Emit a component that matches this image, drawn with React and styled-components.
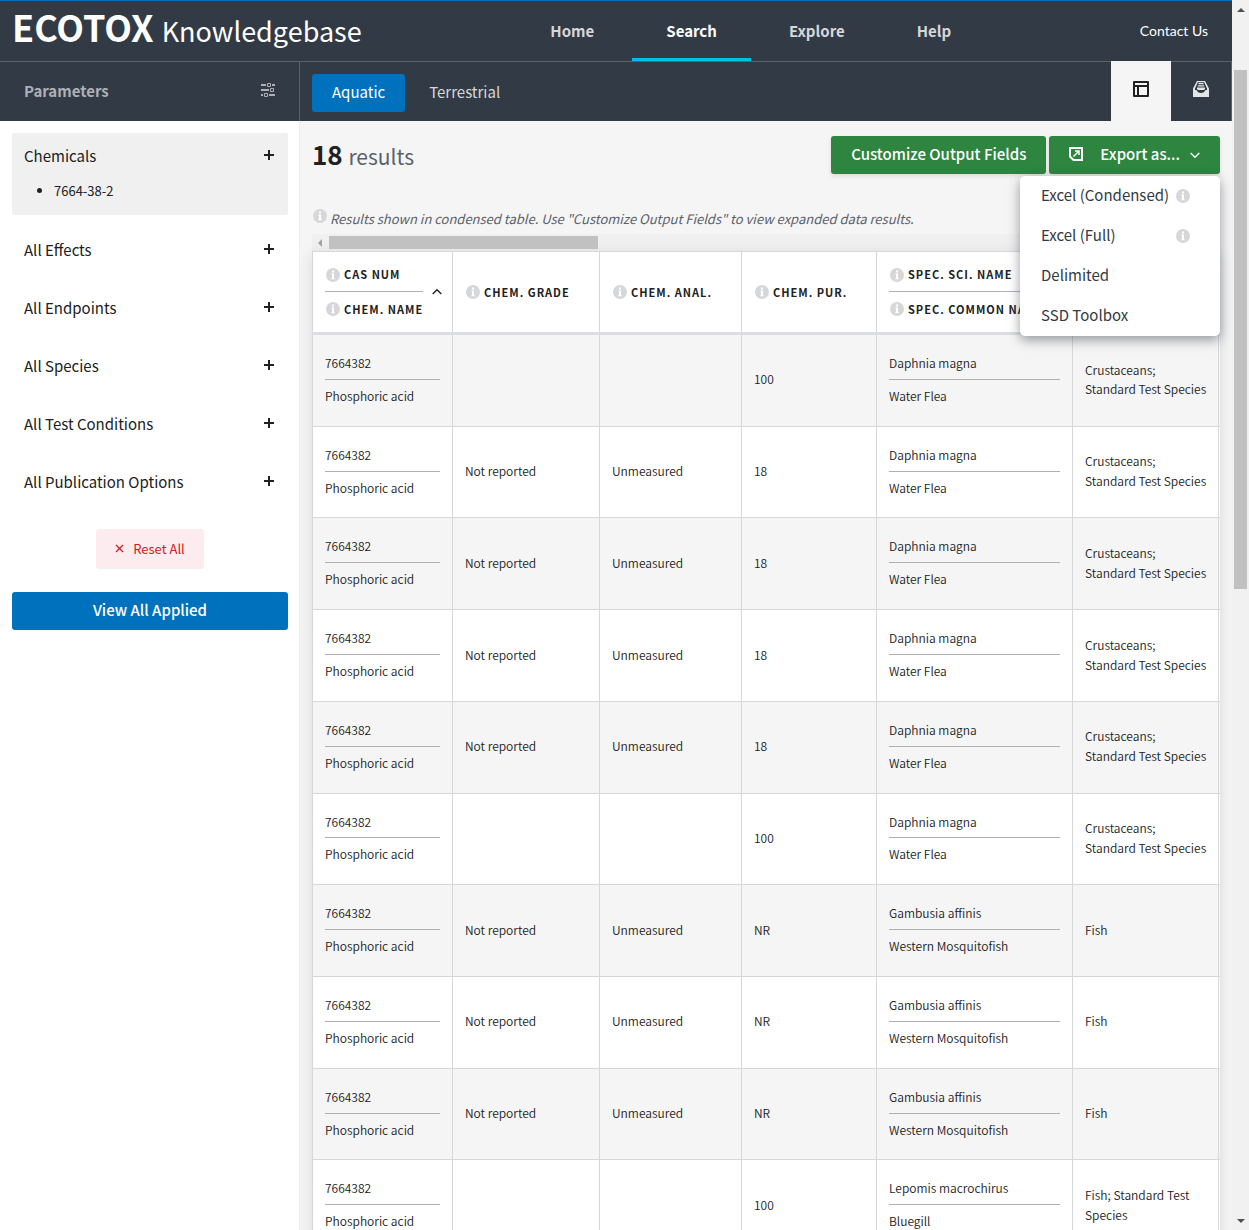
import React from "react";
import styled, { createGlobalStyle } from "styled-components";

const Global = createGlobalStyle`
  *, *::before, *::after { box-sizing: border-box; }
  html, body { margin: 0; padding: 0; }
  body {
    font-family: "Noto Sans CJK SC", "Noto Sans", sans-serif;
    font-size: 15px;
    color: #212121;
    background: #fff;
  }
  button, input { font: inherit; }
  svg { flex: none; }
`;

const Viewport = styled.div`
  display: grid;
  grid-template-columns: minmax(0, 1fr) 17px;
  height: 100vh;
  overflow: hidden;
`;

const Page = styled.div`
  display: flex;
  flex-direction: column;
  min-width: 0;
  overflow: hidden;
`;

const PageScroll = styled.div`
  display: flex;
  flex-direction: column;
  align-items: center;
  justify-content: space-between;
  padding: 6px 0 5px;
  background: #f1f1f1;
`;

const PageThumb = styled.div`
  width: 13px;
  flex: 0 0 519px;
  margin: 56px 0 auto;
  background: #c1c1c1;
`;

const TopBar = styled.header`
  display: flex;
  justify-content: space-between;
  align-items: stretch;
  height: 61px;
  flex: none;
  padding: 0 24px 0 12px;
  border-top: 1px solid #0071bc;
  background: #323a45;
  color: #fff;
`;

const Brand = styled.a`
  display: block;
  color: #fff;
  text-decoration: none;
  font-size: 27px;
  line-height: 50px;
  white-space: nowrap;

  strong {
    margin-right: 2px;
    font-size: 36px;
    font-weight: 700;
  }
`;

const Nav = styled.nav`
  display: flex;
  gap: 4px;
`;

const NavLink = styled.a`
  padding: 0 34px;
  font-weight: 700;
  line-height: 60px;
  text-decoration: none;
  color: ${(p) => (p.$active ? "#fff" : "#d6d7d9")};
  box-shadow: ${(p) => (p.$active ? "inset 0 -3px 0 #00bfe7" : "none")};
`;

const Contact = styled.a`
  font-family: Lato, sans-serif;
  font-size: 14px;
  line-height: 60px;
  color: #fff;
  text-decoration: none;
`;

const SubBar = styled.div`
  display: flex;
  flex: none;
  height: 60px;
  border-top: 1px solid #5b616b;
  background: #323a45;
`;

const ParamHead = styled.div`
  display: flex;
  align-items: center;
  justify-content: space-between;
  width: 300px;
  padding: 0 24px 3px;
  border-right: 1px solid #5b616b;
  color: #aeb0b5;
`;

const ParamTitle = styled.h2`
  margin: 0;
  font-size: 15px;
  font-weight: 700;
`;

const Habitat = styled.div`
  display: flex;
  align-items: center;
  flex: 1;
  padding: 2px 0 0 12px;
  gap: 4px;
`;

const HabitatButton = styled.button`
  height: 38px;
  padding: 0 20px 2px;
  border: 0;
  border-radius: 3px;
  font-size: 15px;
  line-height: 36px;
  background: ${(p) => (p.$active ? "#0071bc" : "transparent")};
  color: ${(p) => (p.$active ? "#fff" : "#d6d7d9")};
`;

const ViewTabs = styled.div`
  display: flex;
  margin-top: -1px;
  border-right: 1px solid #5b616b;
`;

const ViewTab = styled.button`
  display: flex;
  align-items: center;
  justify-content: center;
  width: 60px;
  height: 60px;
  padding: 0 0 4px;
  border: 0;
  background: ${(p) => (p.$active ? "#f5f5f5" : "transparent")};
  color: ${(p) => (p.$active ? "#212121" : "#e4e5e7")};
`;

const Body = styled.div`
  display: flex;
  flex: 1;
  min-height: 0;
`;

const Sidebar = styled.aside`
  flex: 0 0 300px;
  padding: 12px 11px 0 12px;
  border-right: 1px solid #eeeeee;
  background: #fff;
`;

const Group = styled.section`
  margin-bottom: 6px;
  padding: 0 14px 0 12px;
  border-radius: 2px;
  background: ${(p) => (p.$filled ? "#f0f0f0" : "transparent")};
`;

const GroupButton = styled.button`
  display: flex;
  align-items: center;
  justify-content: space-between;
  width: 100%;
  height: ${(p) => (p.$compact ? "46px" : "52px")};
  padding: ${(p) => (p.$compact ? "0 0 2px" : "0")};
  border: 0;
  background: transparent;
  color: #212121;
  font-size: 15px;
`;

const Chosen = styled.ul`
  margin: 0;
  padding: 0 0 12px 30px;
  font-size: 13px;
  line-height: 24px;
`;

const FirstGroup = styled.div`
  padding-bottom: 2px;
`;

const ResetButton = styled.button`
  display: flex;
  align-items: center;
  gap: 9px;
  height: 40px;
  margin: 22px auto 23px;
  padding: 0 19px 2px;
  border: 0;
  border-radius: 3px;
  background: #fdecef;
  color: #cd2026;
  font-size: 13px;
`;

const ApplyButton = styled.button`
  width: 100%;
  height: 38px;
  padding: 0 0 3px;
  border: 0;
  border-radius: 3px;
  background: #0071bc;
  color: #fff;
  font-weight: 500;
`;

const Main = styled.main`
  flex: 1;
  min-width: 0;
  padding: 15px 12px 0;
  background: #f5f5f5;
`;

const ResultBar = styled.div`
  display: flex;
  align-items: flex-start;
  justify-content: space-between;
  height: 70px;
`;

const Count = styled.h1`
  margin: 0;
  font-size: 21px;
  font-weight: 400;
  line-height: 35px;
  color: #5b616b;

  strong {
    margin-right: 1px;
    font-size: 26px;
    font-weight: 700;
    color: #212121;
  }
`;

const Actions = styled.div`
  display: flex;
  gap: 3px;
`;

const GreenButton = styled.button`
  display: flex;
  align-items: center;
  height: 38px;
  padding: 0 20px 3px;
  border: 0;
  border-radius: 3px;
  background: #2e8540;
  color: #fff;
  font-weight: 500;
  white-space: nowrap;
  box-shadow: 0 2px 4px rgba(33, 33, 33, 0.12);
`;

const ExportLabel = styled.span`
  padding: 0 10px 0 17px;
`;

const MenuAnchor = styled.div`
  position: relative;
`;

const Menu = styled.ul`
  position: absolute;
  z-index: 2;
  top: 40px;
  right: 0;
  width: 200px;
  margin: 0;
  padding: 0;
  list-style: none;
  border-radius: 5px;
  background: #fff;
  box-shadow: 0 4px 12px rgba(50, 58, 69, 0.5);
`;

const MenuItem = styled.li`
  display: flex;
  align-items: center;
  justify-content: space-between;
  height: 40px;
  padding: 0 30px 0 21px;
`;

const MenuButton = styled.button`
  padding: 0 0 3px;
  border: 0;
  background: transparent;
  color: #323a45;
  font-size: 15px;
  white-space: nowrap;
`;

const Note = styled.p`
  display: flex;
  align-items: flex-start;
  gap: 3px;
  margin: 0;
  height: 28px;
  font-size: 13px;
  font-style: italic;
  line-height: 25px;
  color: #5b616b;

  svg { margin: 3px 0 0 1px; }
`;

const SideScroll = styled.div`
  display: flex;
  align-items: center;
  height: 17px;
  padding-left: 4px;
  gap: 5px;
  background: #f0f0f0;
`;

const SideThumb = styled.div`
  width: 269px;
  height: 13px;
  background: #c1c1c1;
`;

const TableWrap = styled.div`
  overflow: hidden;
  background: #fff;
  box-shadow: 0 4px 14px rgba(50, 58, 69, 0.14);
`;

const Table = styled.table`
  width: 1040px;
  table-layout: fixed;
  border-collapse: collapse;
  font-size: 12px;
  line-height: 1.655;

  th, td {
    padding: 0 12px;
    border: 1px solid #d6d7d9;
    text-align: left;
    vertical-align: middle;
  }
  td {
    padding-bottom: 2px;
    font-weight: 350;
  }
  thead th {
    height: 82px;
    padding-right: 8px;
    border-bottom: 3px solid #dcdde0;
    font-size: 11px;
    letter-spacing: 1px;
    white-space: nowrap;
    text-transform: uppercase;
  }
  tbody tr:nth-child(odd) { background: #f5f5f5; }
  td:nth-child(6) { padding-right: 10px; }
`;

const HeadCell = styled.div`
  display: flex;
  align-items: center;
  gap: 9px;
`;

const HeadLabel = styled.div`
  display: flex;
  align-items: center;
  gap: 4px;
  height: ${(p) => (p.$stacked ? "34px" : "20px")};
  border-bottom: ${(p) => (p.$ruled ? "1px solid #aeb0b5" : "0")};

  svg { margin-left: 1px; }
`;

const Upper = styled.div`
  padding: 18px 0 6px;
  border-bottom: 1px solid #aeb0b5;
`;

const Lower = styled.div`
  padding: 6px 0 18px;
`;

const Icon = ({ size = 14, box = 14, children, label }) => (
  <svg width={size} height={size} viewBox={`0 0 ${box} ${box}`} fill="none" aria-hidden={label ? undefined : true} aria-label={label}>
    {children}
  </svg>
);

const InfoIcon = () => (
  <Icon>
    <circle cx="7" cy="7" r="7" fill="#d6d7d9" />
    <path d="M6 2.500h2v2H6zM5.300 5.600H8v4.600h.8v1H5.200v-1H6V6.600h-.7z" fill="#fff" />
  </Icon>
);

const TuneIcon = () => (
  <Icon>
    <path d="M0 1h5v2H0zM11 1h3v2h-3zM0 6h8v2H0zM0 11h2v2H0zM8 11h6v2H8z" fill="#aeb0b5" />
    <path d="M6.500 .5h3v3h-3zM9.500 5.500h3v3h-3zM3.500 10.500h3v3h-3z" stroke="#aeb0b5" />
  </Icon>
);

const PlusIcon = () => (
  <Icon size={10} box={10}>
    <path d="M4 0h2v4h4v2H6v4H4V6H0V4h4z" fill="#212121" />
  </Icon>
);

const CloseIcon = () => (
  <Icon size={9} box={9}>
    <path d="M1 1l7 7M8 1L1 8" stroke="#cd2026" strokeWidth="1.300" />
  </Icon>
);

const LayoutIcon = () => (
  <Icon size={16} box={16}>
    <path d="M1 1h14v14H1zM1 5h14M5 5v10" stroke="currentColor" strokeWidth="2" strokeLinejoin="round" />
  </Icon>
);

const InboxIcon = () => (
  <Icon size={16} box={16}>
    <path d="M4 0h8l4 7.500V16H0V7.500z" fill="currentColor" />
    <path d="M4.800 1.200h6.400L14 7.500V9h-1.500c-.8 2-2.300 3-4.500 3s-3.700-1-4.500-3H2V7.500z" fill="#323a45" />
    <path d="M5.500 2h5v1.200h-5zM4.800 4.200h6.400v1.300H4.800zM4 6.600h8V8l-1 1H5L4 8z" fill="currentColor" />
  </Icon>
);

const ExportIcon = () => (
  <Icon>
    <path d="M1 1h12v12H4.500L1 9.500z" stroke="#fff" strokeWidth="2" />
    <path d="M6 4h4v4M10 4L4.500 9.500" stroke="#fff" strokeWidth="1.500" />
  </Icon>
);

const ChevronDown = () => (
  <Icon size={10} box={10}>
    <path d="M.7 4L5 8.300 9.300 4" stroke="#fff" strokeWidth="1.400" />
  </Icon>
);

const ChevronUp = () => (
  <Icon size={10} box={10}>
    <path d="M.7 7L5 2.700 9.300 7" stroke="#212121" strokeWidth="1.400" />
  </Icon>
);

const Arrow = ({ dir }) => {
  const d = { up: "M0 6l4-4 4 4z", down: "M0 2h8L4 6z", left: "M6 0v8L2 4z" }[dir];
  const fill = dir === "left" ? "#a3a3a3" : "#505050";
  return (
    <Icon size={8} box={8}>
      <path d={d} fill={fill} />
    </Icon>
  );
};

const groups = ["All Effects", "All Endpoints", "All Species", "All Test Conditions", "All Publication Options"];

const columns = [
  { width: 140, labels: ["CAS Num", "Chem. Name"], sorted: true },
  { width: 147, labels: ["Chem. Grade"] },
  { width: 142, labels: ["Chem. Anal."] },
  { width: 135, labels: ["Chem. Pur."] },
  { width: 196, labels: ["Spec. Sci. Name", "Spec. Common Name"] },
  { width: 146, labels: [] },
  { width: 134, labels: [] },
];

const crust = "Crustaceans; Standard Test Species";
const daphnia = ["Daphnia magna", "Water Flea", crust];
const gambusia = ["Gambusia affinis", "Western Mosquitofish", "Fish"];
const lepomis = ["Lepomis macrochirus", "Bluegill", "Fish; Standard Test Species"];

const rows = [
  ["", "", "100", ...daphnia],
  ["Not reported", "Unmeasured", "18", ...daphnia],
  ["Not reported", "Unmeasured", "18", ...daphnia],
  ["Not reported", "Unmeasured", "18", ...daphnia],
  ["Not reported", "Unmeasured", "18", ...daphnia],
  ["", "", "100", ...daphnia],
  ["Not reported", "Unmeasured", "NR", ...gambusia],
  ["Not reported", "Unmeasured", "NR", ...gambusia],
  ["Not reported", "Unmeasured", "NR", ...gambusia],
  ["", "", "100", ...lepomis],
];

const exportFormats = [
  { name: "Excel (Condensed)", info: true },
  { name: "Excel (Full)", info: true },
  { name: "Delimited" },
  { name: "SSD Toolbox" },
];

export default function App() {
  return (
    <Viewport>
      <Global />
      <Page>
        <TopBar>
          <Brand href="#"><strong>ECOTOX</strong> Knowledgebase</Brand>
          <Nav>
            <NavLink href="#">Home</NavLink>
            <NavLink href="#" $active>Search</NavLink>
            <NavLink href="#">Explore</NavLink>
            <NavLink href="#">Help</NavLink>
          </Nav>
          <Contact href="#">Contact Us</Contact>
        </TopBar>
        <SubBar>
          <ParamHead>
            <ParamTitle>Parameters</ParamTitle>
            <TuneIcon />
          </ParamHead>
          <Habitat>
            <HabitatButton $active>Aquatic</HabitatButton>
            <HabitatButton>Terrestrial</HabitatButton>
          </Habitat>
          <ViewTabs>
            <ViewTab $active aria-label="Table view"><LayoutIcon /></ViewTab>
            <ViewTab aria-label="Inbox"><InboxIcon /></ViewTab>
          </ViewTabs>
        </SubBar>
        <Body>
          <Sidebar>
            <FirstGroup>
              <Group $filled>
                <GroupButton $compact>Chemicals<PlusIcon /></GroupButton>
                <Chosen><li>7664-38-2</li></Chosen>
              </Group>
            </FirstGroup>
            {groups.map((g) => (
              <Group key={g}>
                <GroupButton>{g}<PlusIcon /></GroupButton>
              </Group>
            ))}
            <ResetButton><CloseIcon />Reset All</ResetButton>
            <ApplyButton>View All Applied</ApplyButton>
          </Sidebar>
          <Main>
            <ResultBar>
              <Count><strong>18</strong> results</Count>
              <Actions>
                <GreenButton>Customize Output Fields</GreenButton>
                <MenuAnchor>
                  <GreenButton aria-expanded="true">
                    <ExportIcon />
                    <ExportLabel>Export as...</ExportLabel>
                    <ChevronDown />
                  </GreenButton>
                  <Menu>
                    {exportFormats.map((e) => (
                      <MenuItem key={e.name}>
                        <MenuButton>{e.name}</MenuButton>
                        {e.info && <InfoIcon />}
                      </MenuItem>
                    ))}
                  </Menu>
                </MenuAnchor>
              </Actions>
            </ResultBar>
            <Note>
              <InfoIcon />
              Results shown in condensed table. Use "Customize Output Fields" to view expanded data results.
            </Note>
            <SideScroll><Arrow dir="left" /><SideThumb /></SideScroll>
            <TableWrap>
              <Table>
                <colgroup>
                  {columns.map((c, i) => <col key={i} width={c.width} />)}
                </colgroup>
                <thead>
                  <tr>
                    {columns.map((c, i) => (
                      <th key={i} scope="col">
                        <HeadCell>
                          <div>
                            {c.labels.map((l, j) => (
                              <HeadLabel key={l} $stacked={c.labels.length > 1} $ruled={c.labels.length > 1 && j === 0}>
                                <InfoIcon />{l}
                              </HeadLabel>
                            ))}
                          </div>
                          {c.sorted && <ChevronUp />}
                        </HeadCell>
                      </th>
                    ))}
                  </tr>
                </thead>
                <tbody>
                  {rows.map(([grade, anal, pur, sci, common, group], i) => (
                    <tr key={i}>
                      <td><Upper>7664382</Upper><Lower>Phosphoric acid</Lower></td>
                      <td>{grade}</td>
                      <td>{anal}</td>
                      <td>{pur}</td>
                      <td><Upper>{sci}</Upper><Lower>{common}</Lower></td>
                      <td>{group}</td>
                      <td />
                    </tr>
                  ))}
                </tbody>
              </Table>
            </TableWrap>
          </Main>
        </Body>
      </Page>
      <PageScroll aria-hidden="true">
        <Arrow dir="up" />
        <PageThumb />
        <Arrow dir="down" />
      </PageScroll>
    </Viewport>
  );
}
